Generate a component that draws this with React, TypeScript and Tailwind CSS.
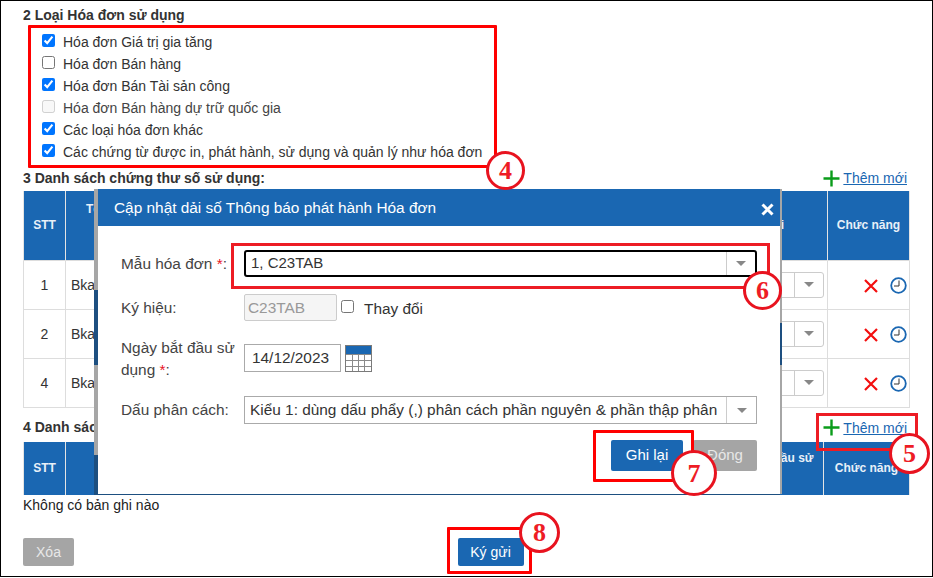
import React from "react";

const Plus = () => (
  <svg width="17" height="17" viewBox="0 0 17 17" className="shrink-0">
    <path d="M8.5 0.5V16.5M0.5 8.5H16.5" stroke="#0a9c1a" strokeWidth="2.4" fill="none" />
  </svg>
);

const AddLink = () => (
  <div className="flex items-center">
    <Plus />
    <a className="ml-[3px] text-[14px] leading-[20px] text-[#1a67b2] underline">Thêm mới</a>
  </div>
);

const DelIcon = () => (
  <svg width="14" height="14" viewBox="0 0 14 14">
    <path d="M1 1L13 13M13 1L1 13" stroke="#f30f0f" strokeWidth="2.2" fill="none" />
  </svg>
);

const ClockIcon = () => (
  <svg width="17" height="17" viewBox="0 0 17 17">
    <circle cx="8.5" cy="8.5" r="7.3" stroke="#1a67b2" strokeWidth="1.8" fill="#fff" />
    <path d="M9 3.5V9H4" stroke="#333" strokeWidth="1" fill="none" />
  </svg>
);

const Arrow = () => (
  <span className="block h-0 w-0 border-x-[5px] border-t-[5px] border-x-transparent border-t-[#888]" />
);

const Circle = ({ n, className }: { n: string; className: string }) => (
  <div
    className={`absolute flex items-center justify-center rounded-full border-[3px] border-[#e8131f] bg-white font-['Liberation_Serif',serif] text-[26px] font-bold text-[#ee1c25] ${className}`}
  >
    {n}
  </div>
);

const checks: [string, boolean, boolean][] = [
  ["Hóa đơn Giá trị gia tăng", true, false],
  ["Hóa đơn Bán hàng", false, false],
  ["Hóa đơn Bán Tài sản công", true, false],
  ["Hóa đơn Bán hàng dự trữ quốc gia", false, true],
  ["Các loại hóa đơn khác", true, false],
  ["Các chứng từ được in, phát hành, sử dụng và quản lý như hóa đơn", true, false],
];

const th = "border-x border-[#e4e4e4] bg-[#1a67b2] text-[12px] font-bold leading-[16px] text-[#e8f0f8] align-middle";

const CertRow = ({ n }: { n: string }) => (
  <tr className="h-[49px] text-[14px] text-[#333]">
    <td className="border border-[#ddd] pt-[2px] text-center">{n}</td>
    <td className="border border-[#ddd] pl-[5px] pt-[2px]">Bkav</td>
    <td className="border border-[#ddd]">
      <div className="flex justify-end pr-[3px]">
        <div className="flex h-[26px] w-[140px] justify-end rounded-[3px] border border-[#ccc]">
          <div className="flex w-[29px] items-center justify-center border-l border-[#ccc]">
            <Arrow />
          </div>
        </div>
      </div>
    </td>
    <td className="border border-[#ddd] pt-[2px]">
      <div className="flex items-center justify-end gap-[12px] pr-[2px]">
        <DelIcon />
        <ClockIcon />
      </div>
    </td>
  </tr>
);

const Label = ({ children, top = "" }: { children: React.ReactNode; top?: string }) => (
  <div className={`w-[123px] shrink-0 text-[15.4px] leading-[22px] text-[#444] ${top}`}>{children}</div>
);

const Star = () => <span className="text-[#e8131f]"> *</span>;

const Calendar = () => (
  <svg width="27" height="27" viewBox="0 0 27 27" className="ml-[4px] mt-[1px]">
    <rect x="0.5" y="0.5" width="26" height="26" fill="#fff" stroke="#7a7a7a" />
    <rect x="1" y="1" width="25" height="8" fill="#1a67b2" />
    <path d="M1 9.5H26M1 15.5H26M1 21.5H26M7.5 9V26M13.5 9V26M19.5 9V26" stroke="#8a8a8a" strokeWidth="1" fill="none" />
  </svg>
);

const Modal = () => (
  <div className="absolute left-[97px] top-[188px] flex h-[305px] w-[682px] flex-col bg-white">
    <div className="absolute left-[-4px] top-0 flex h-full w-[4px] flex-col">
      <div className="h-[101px] bg-[#a6a6a6]" />
      <div className="h-[75px] bg-[#1d4f80]" />
      <div className="h-[90px] bg-[#a6a6a6]" />
      <div className="flex-1 bg-[#1d4f80]" />
    </div>
    <div className="absolute right-[-2px] top-0 flex h-full w-[2px] flex-col">
      <div className="h-[134px] bg-[#a6a6a6]" />
      <div className="h-[42px] bg-[#1d4f80]" />
      <div className="flex-1 bg-[#a6a6a6]" />
    </div>
    <div className="absolute bottom-[-1px] left-[-4px] h-[1px] w-[686px] bg-[#1d4f80]" />

    <div className="flex h-[37px] shrink-0 items-center justify-between bg-[#1a67b2] pl-[16px] pr-[6px] text-[15.4px] text-white">
      <span>Cập nhật dải số Thông báo phát hành Hóa đơn</span>
      <svg width="13" height="13" viewBox="0 0 13 13" className="mt-[4px]">
        <path d="M1.5 1.5L11.5 11.5M11.5 1.5L1.5 11.5" stroke="#fff" strokeWidth="3" fill="none" />
      </svg>
    </div>

    <div className="flex flex-col px-[23px] pt-[24px]">
      <div className="flex items-center">
        <Label>
          Mẫu hóa đơn<Star />:
        </Label>
        <div className="flex h-[27px] flex-1 items-center justify-between rounded-[3px] border-2 border-black pl-[5px] text-[15px] text-[#333]">
          <span>1, C23TAB</span>
          <div className="flex h-full w-[29px] items-center justify-center border-l border-[#ccc]">
            <Arrow />
          </div>
        </div>
      </div>

      <div className="mt-[17px] flex items-center">
        <Label>Ký hiệu:</Label>
        <div className="flex h-[27px] w-[93px] items-center rounded-[2px] border border-[#ccc] bg-[#f5f5f5] pl-[3px] text-[15.4px] text-[#999]">
          C23TAB
        </div>
        <input type="checkbox" readOnly className="ml-[4px] mb-[3px] h-[13px] w-[13px]" />
        <span className="ml-[10px] mt-[2px] text-[15.4px] text-[#333]">Thay đổi</span>
      </div>

      <div className="mt-[23px] flex items-start">
        <Label top="mt-[-7px]">
          Ngày bắt đầu sử dụng<Star />:
        </Label>
        <div className="flex h-[28px] w-[97px] items-center border border-[#aaa] pl-[7px] text-[15.4px] text-[#333]">
          14/12/2023
        </div>
        <Calendar />
      </div>

      <div className="mt-[15px] flex items-center">
        <Label>Dấu phân cách:</Label>
        <div className="flex h-[28px] flex-1 items-center justify-between border border-[#aaa] pl-[5px] text-[15.4px] text-[#333]">
          <span className="whitespace-nowrap">Kiểu 1: dùng dấu phẩy (,) phân cách phần nguyên &amp; phần thập phân</span>
          <div className="flex h-full w-[30px] items-center justify-center border-l border-[#ccc]">
            <Arrow />
          </div>
        </div>
      </div>

      <div className="mt-[16px] flex justify-end gap-[10px]">
        <div className="flex h-[31px] w-[72px] items-center justify-center rounded-[2px] bg-[#1a67b2] text-[15px] text-white">
          Ghi lại
        </div>
        <div className="flex h-[31px] w-[64px] items-center justify-center rounded-[2px] bg-[#a5a5a5] text-[15px] text-[#e8e8e8]">
          Đóng
        </div>
      </div>
    </div>
  </div>
);

export default function App() {
  return (
    <div className="relative h-[577px] w-[933px] overflow-hidden border border-black bg-white pl-[22px] font-['Liberation_Sans',Arial,sans-serif] text-[#333]">
      <div className="pt-[4px] text-[14px] font-bold leading-[20px]">2 Loại Hóa đơn sử dụng</div>

      <div className="mt-[5px] flex flex-col pl-[19px]">
        {checks.map(([t, c, d]) => (
          <label key={t} className={`flex h-[22px] items-center text-[14px] ${d ? "text-[#444]" : "text-[#333]"}`}>
            <input type="checkbox" defaultChecked={c} disabled={d} className="mb-[2px] h-[13px] w-[13px]" />
            <span className="ml-[8px] mt-[2px]">{t}</span>
          </label>
        ))}
      </div>

      <div className="mt-[4px] flex h-[24px] w-[886px] items-center justify-between pr-[2px]">
        <span className="text-[14px] font-bold">3 Danh sách chứng thư số sử dụng:</span>
        <AddLink />
      </div>

      <table className="mt-[1px] w-[886px] table-fixed border-collapse">
        <colgroup>
          <col className="w-[42px]" />
          <col className="w-[618px]" />
          <col className="w-[144px]" />
          <col className="w-[82px]" />
        </colgroup>
        <thead>
          <tr className="h-[69px]">
            <th className={th}>STT</th>
            <th className={`${th} text-left`}>
              <span className="mb-[32px] ml-[20px] block">Tên</span>
            </th>
            <th className={th}>Trạng thái</th>
            <th className={th}>Chức năng</th>
          </tr>
        </thead>
        <tbody>
          <CertRow n="1" />
          <CertRow n="2" />
          <CertRow n="4" />
        </tbody>
      </table>

      <div className="mt-[8px] flex h-[24px] w-[886px] items-center justify-between pr-[2px]">
        <span className="text-[14px] font-bold">4 Danh sách</span>
        <AddLink />
      </div>

      <table className="mt-[2px] w-[886px] table-fixed border-collapse">
        <colgroup>
          <col className="w-[42px]" />
          <col className="w-[640px]" />
          <col className="w-[118px]" />
          <col className="w-[86px]" />
        </colgroup>
        <thead>
          <tr className="h-[53px]">
            <th className={th}>STT</th>
            <th className={th}></th>
            <th className={th}>
              <div className="pl-[4px] leading-[20px]">
                Ngày bắt đầu sử
                <br />
                dụng
              </div>
            </th>
            <th className={th}>Chức năng</th>
          </tr>
        </thead>
      </table>

      <div className="text-[14px] leading-[20px] text-[#222]">Không có bản ghi nào</div>

      <div className="relative mt-[23px] flex h-[28px] w-[886px] justify-center">
        <div className="absolute left-0 top-0 flex h-[28px] w-[51px] items-center justify-center rounded-[2px] bg-[#a5a5a5] pt-[2px] text-[14px] text-[#e8e8e8]">
          Xóa
        </div>
        <div className="ml-[49px] flex h-[28px] w-[66px] items-center justify-center rounded-[2px] bg-[#1a67b2] pt-[2px] text-[14px] text-white">
          Ký gửi
        </div>
      </div>

      <Modal />

      <div className="absolute left-[27px] top-[24px] h-[143px] w-[469px] rounded-[1px] border-[3px] border-[#f00]" />
      <div className="absolute left-[815px] top-[412px] h-[38px] w-[102px] border-[3px] border-[#ed1c24]" />
      <div className="absolute left-[230px] top-[242px] h-[46px] w-[539px] border-[3px] border-[#ed1c24]" />
      <div className="absolute left-[592px] top-[429px] h-[52px] w-[101px] rounded-[1px] border-[3px] border-[#f00]" />
      <div className="absolute left-[446px] top-[526px] h-[47px] w-[85px] rounded-[1px] border-[3px] border-[#f00]" />

      <Circle n="4" className="left-[485px] top-[150px] h-[39px] w-[39px]" />
      <Circle n="5" className="left-[888px] top-[432px] h-[41px] w-[41px]" />
      <Circle n="6" className="left-[742px] top-[270px] h-[39px] w-[39px]" />
      <Circle n="7" className="left-[670px] top-[449px] h-[46px] w-[46px]" />
      <Circle n="8" className="left-[518px] top-[511px] h-[41px] w-[41px]" />
    </div>
  );
}
